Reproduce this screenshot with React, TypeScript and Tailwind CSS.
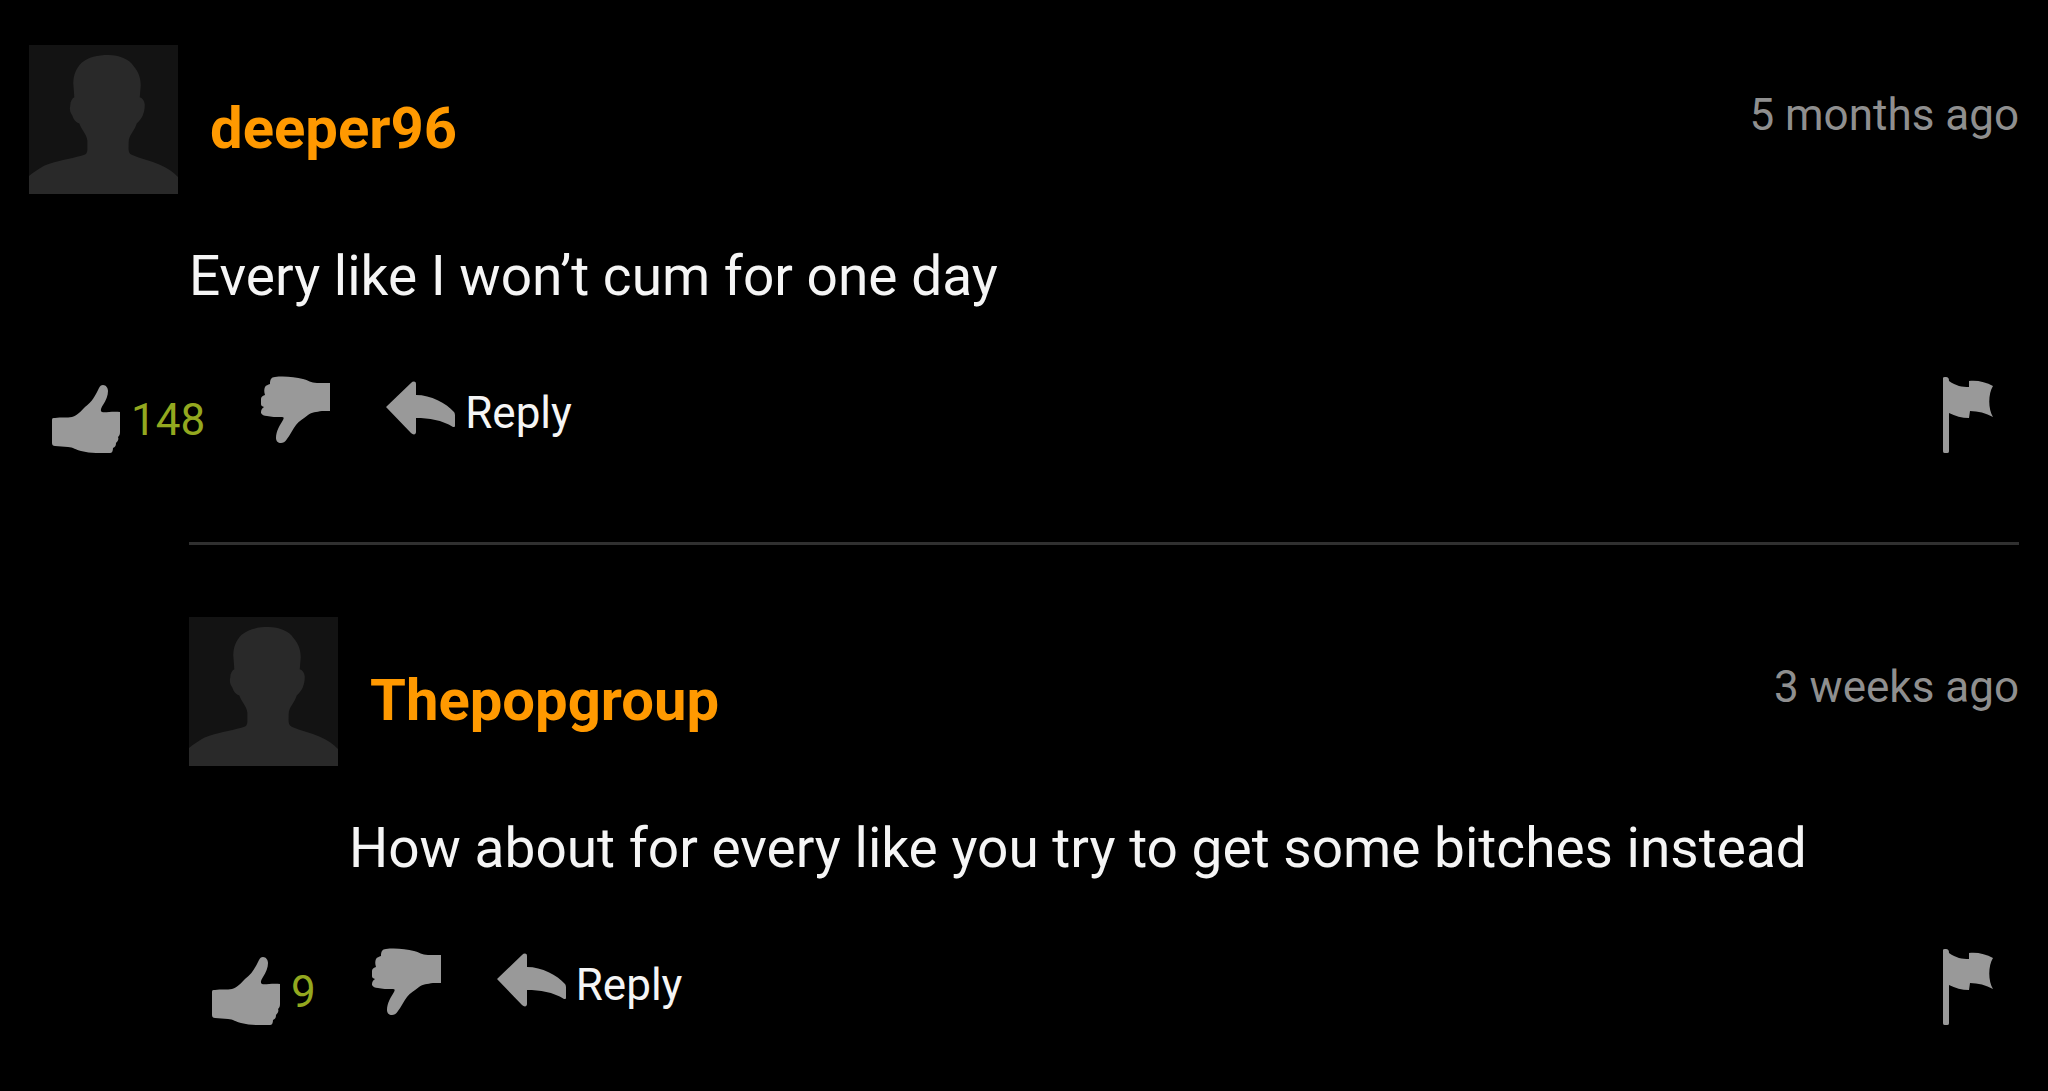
import type { ReactNode } from 'react';

type TComment = {
  id: number;
  author: string;
  date: string;
  text: string;
  likes: number;
};

const comment: TComment = {
  id: 1,
  author: 'deeper96',
  date: '5 months ago',
  text: 'Every like I won’t cum for one day',
  likes: 148,
};

const replies: TComment[] = [
  {
    id: 2,
    author: 'Thepopgroup',
    date: '3 weeks ago',
    text: 'How about for every like you try to get some bitches instead',
    likes: 9,
  },
];

const Avatar = () => (
  <svg viewBox="0 0 148 148" className="size-[149px] shrink-0 bg-[#131313]" aria-hidden="true">
    <path
      fill="#292929"
      d="M79 10C90 10 99 14 104 21C109 27 111 33 111 40L110 52C113 53 115 56 115 60C115 64 114 67 113 70C111 74 109 76 107 78C105 85 99 90 99 96C99 103 98 107 102 109C111 113 121 115 130 119C137 122 143 126 148 131V148H0V130C5 126 10 123 15 120C27 115 41 113 52 110C57 109 58 107 58 103V95C57 88 52 84 50 78C47 77 44 74 43 70C41 67 40 64 41 60C41 56 43 53 45 52L44 38C44 30 47 23 52 18C59 12 68 10 79 10Z"
    />
  </svg>
);

const LikeIcon = () => (
  <svg viewBox="0 0 69 69" className="size-[69px] shrink-0" fill="#999999" aria-hidden="true">
    <path d="M47 3C48 1 49 0 51 0C54 0 56 3 56 6C56 11 54 15 51 20C49 23 48 26 50 27C53 28 60 26 68 27L68 47C68 50 67 51 66 52C67 54 66 56 64 58C64 61 63 62 61 63C61 66 60 68 58 68H44C39 68 34 67 29 66C24 65 21 62 16 62L3 61C1 61 0 60 0 58V35C0 33 1 33 3 33C9 32 15 33 20 32C26 30 29 26 33 22C40 17 43 11 47 3Z" />
  </svg>
);

const DislikeIcon = () => (
  <svg viewBox="0 0 69 69" className="size-[69px] shrink-0" fill="#999999" aria-hidden="true">
    <path d="M14 1C23 0 34 1 42 3C47 4 50 7 56 7H69V35H61C55 36 51 36 47 39C42 43 38 45 35 49C32 53 29 59 26 63C24 66 22 67 20 67C17 67 15 65 15 62C15 55 19 49 22 44C23 42 23 41 21 41C15 41 10 41 6 40C3 40 1 39 0 37C0 35 0 33 3 31C0 30 0 29 0 27V23C0 21 1 20 4 19C3 16 3 13 4 11C5 9 7 9 9 8C9 4 10 1 14 1Z" />
  </svg>
);

const ReplyIcon = () => (
  <svg viewBox="0 0 69 61" className="h-[61px] w-[69px] shrink-0" fill="#999999" aria-hidden="true">
    <path d="M0 31L25 7C27 5 30 5 30 8V19C45 19 60 27 68 36C69 37 69 39 69 41V50C69 51 68 51 67 51C56 44 43 42 30 42V56C30 59 27 59 25 57Z" />
  </svg>
);

const FlagIcon = () => (
  <svg viewBox="0 0 50 78" className="h-[78px] w-[50px]" fill="#999999" aria-hidden="true">
    <path d="M0 2C0 1 1 1 3 1C5 1 6 2 6 5C13 10 19 11 26 11V5C34 4 43 6 50 10C45 18 45 33 50 41C43 37 35 35 27 35L26 42C19 42 12 40 6 37V75C6 77 5 77 3 77C1 77 0 77 0 75Z" />
  </svg>
);

type Props = {
  comment: TComment;
  children?: ReactNode;
};

const CommentItem = ({ comment, children }: Props) => {
  return (
    <article>
      {/* author and date */}
      <header className="flex items-start">
        <Avatar />
        <a href="#" className="mt-[51px] ml-8 text-[58px] leading-[64px] font-bold text-[#ff9900]">
          {comment.author}
        </a>
        <time className="mt-[46px] ml-auto text-[44px] leading-[48px] text-[#8f8f8f]">
          {comment.date}
        </time>
      </header>

      <p className="mt-[50px] ml-[160px] text-[55px] leading-[64px] text-[#f5f5f5]">
        {comment.text}
      </p>

      {/* actions */}
      <div className="mt-[68px] flex items-start pr-[26px] pl-[23px] text-[44px] leading-[48px]">
        <button type="button" aria-label="Like" className="mt-[9px] flex items-center gap-[10px]">
          <LikeIcon />
          <span className="text-[#93a81f]">{comment.likes}</span>
        </button>
        <button type="button" aria-label="Dislike" className="ml-14">
          <DislikeIcon />
        </button>
        <button type="button" className="ml-14 flex items-end gap-[10px] text-[#f5f5f5]">
          <ReplyIcon />
          Reply
        </button>
        <button type="button" aria-label="Report" className="ml-auto">
          <FlagIcon />
        </button>
      </div>

      {children}
    </article>
  );
};

const App = () => {
  return (
    <main className="min-h-screen bg-black px-[29px] pt-[45px] font-['Roboto',sans-serif]">
      <CommentItem comment={comment}>
        <div className="mt-[88px] ml-[160px] border-t-3 border-[#303030] pt-[72px]">
          {replies.map((reply) => (
            <CommentItem key={reply.id} comment={reply} />
          ))}
        </div>
      </CommentItem>
    </main>
  );
};

export default App;
